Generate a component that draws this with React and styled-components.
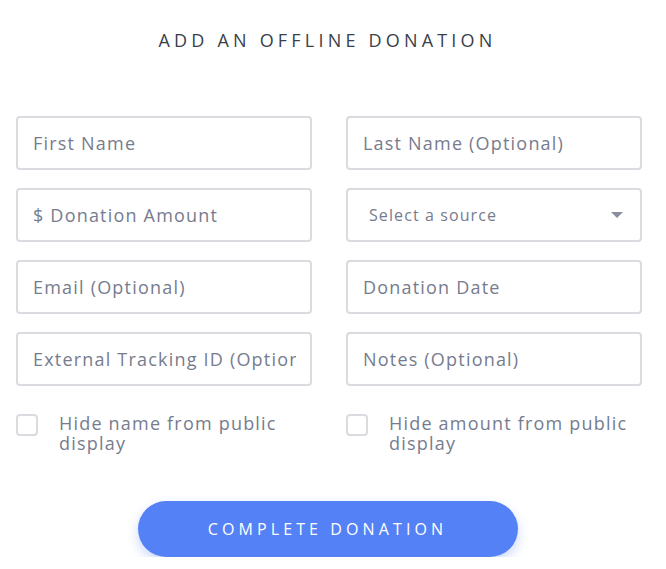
import styled, { createGlobalStyle } from 'styled-components'

const GlobalStyle = createGlobalStyle`
    body {
        margin: 0;
        background: #ffffff;
        font-family: "Open Sans", "Liberation Sans", sans-serif;
    }
    * { box-sizing: border-box; }
`

const Wrapper = styled.div`
    width: 655px;
    padding-top: 28px;
    display: flex;
    flex-direction: column;
    align-items: center;
`

const Title = styled.h2`
    margin: 0;
    font-size: 18px;
    font-weight: 500;
    letter-spacing: 4.2px;
    color: #3a3f4b;
    line-height: 24px;
`

const Grid = styled.div`
    align-self: flex-start;
    width: 626px;
    margin: 64px 0 0 16px;
    display: grid;
    grid-template-columns: 296px 296px;
    column-gap: 34px;
    row-gap: 18px;
`

const Field = styled.input`
    width: 100%;
    height: 54px;
    padding: 0 14px 0 15px;
    border: 2px solid #dadae0;
    border-radius: 4px;
    font-family: inherit;
    font-size: 18px;
    letter-spacing: 1.2px;
    color: #3a3f4b;
    outline: none;
    &::placeholder { color: #767c8e; }
`

const SelectBox = styled.div`
    height: 54px;
    padding: 0 17px 0 21px;
    border: 2px solid #dadae0;
    border-radius: 4px;
    display: flex;
    align-items: center;
    justify-content: space-between;
    font-size: 16px;
    letter-spacing: 1.1px;
    color: #767c8e;
`

const Caret = styled.span`
    width: 0;
    height: 0;
    border-left: 6px solid transparent;
    border-right: 6px solid transparent;
    border-top: 6px solid #8a8fa0;
`

const CheckRow = styled.label`
    display: flex;
    align-items: flex-start;
    gap: 21px;
    margin-top: 9px;
    font-size: 18px;
    letter-spacing: 1.2px;
    line-height: 20px;
    color: #767c8e;
`

const Box = styled.span`
    flex: none;
    width: 22px;
    height: 22px;
    margin-top: 1px;
    border: 2px solid #dadae0;
    border-radius: 4px;
`

const Button = styled.button`
    margin-top: 48px;
    width: 380px;
    height: 56px;
    border: none;
    border-radius: 28px;
    background: #5581f6;
    color: #ffffff;
    font-family: inherit;
    font-size: 16px;
    letter-spacing: 4.1px;
    padding-left: 6px;
    box-shadow: 0 5px 12px rgba(85, 129, 246, 0.3);
`

export default function App() {
    return (
        <Wrapper>
            <GlobalStyle />
            <Title>ADD AN OFFLINE DONATION</Title>
            <Grid>
                <Field placeholder="First Name" />
                <Field placeholder="Last Name (Optional)" />
                <Field placeholder="$ Donation Amount" />
                <SelectBox>
                    <span>Select a source</span>
                    <Caret />
                </SelectBox>
                <Field placeholder="Email (Optional)" />
                <Field placeholder="Donation Date" />
                <Field placeholder="External Tracking ID (Optional)" />
                <Field placeholder="Notes (Optional)" />
                <CheckRow>
                    <Box />
                    <span>Hide name from public display</span>
                </CheckRow>
                <CheckRow>
                    <Box />
                    <span>Hide amount from public display</span>
                </CheckRow>
            </Grid>
            <Button>COMPLETE DONATION</Button>
        </Wrapper>
    )
}
